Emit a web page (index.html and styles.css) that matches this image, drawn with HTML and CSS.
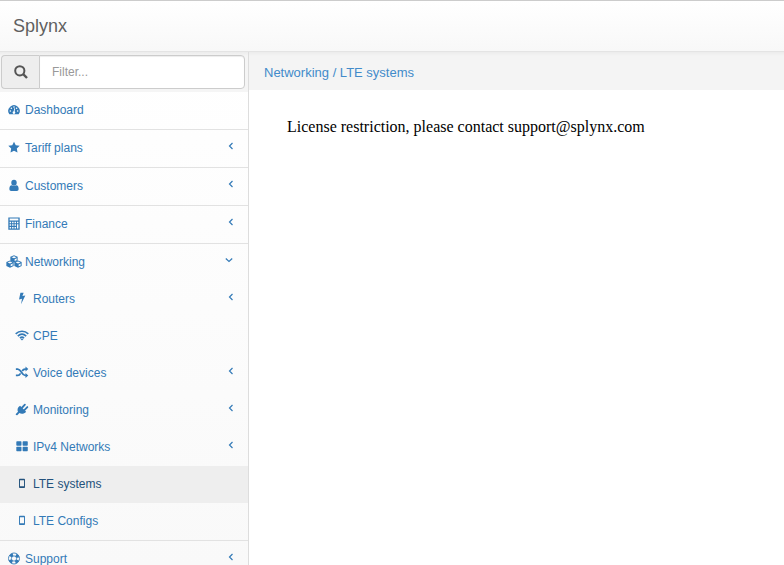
FILE: index.html
```html
<!DOCTYPE html>
<html lang="en">
<head>
<meta charset="utf-8">
<title>Splynx</title>
<link rel="stylesheet" href="styles.css">
</head>
<body>
<header class="navbar"><a class="brand">Splynx</a></header>
<div class="layout">
<aside class="sidebar">
  <div class="search">
    <span class="addon"><svg width="14" height="14" viewBox="0 0 14 14" fill="none" stroke="#555" stroke-width="2"><circle cx="5.800" cy="5.800" r="4.600"/><path d="M9.200 9.200 13 13" stroke-width="2.400"/></svg></span>
    <input class="filter" type="text" placeholder="Filter...">
  </div>
  <nav class="menu">
    <a class="item"><svg class="icon" viewBox="0 0 16 14"><path d="M2.700 12.500A6.500 6.500 0 1 1 13.300 12.500Z"/><g fill="#fff"><circle cx="3.800" cy="8.700" r=".9"/><circle cx="5" cy="5.500" r=".9"/><circle cx="8" cy="4.100" r=".9"/><circle cx="11" cy="5.500" r=".9"/><circle cx="12.200" cy="8.700" r=".9"/><path d="m8.400 5.500.9.200-.6 3.400a1.500 1.500 0 1 1-1.100-.2z"/></g></svg><span>Dashboard</span></a>
    <a class="item"><svg class="icon" viewBox="0 0 16 14"><path d="m8 .3 2 4.100 4.500.6-3.300 3.200.8 4.500L8 10.600l-4 2.100.8-4.500L1.500 5l4.500-.6z"/></svg><span>Tariff plans</span><svg class="chevron" viewBox="0 0 8 8"><path d="M5.500 1 2.500 4 5.500 7"/></svg></a>
    <a class="item"><svg class="icon" viewBox="0 0 16 14"><ellipse cx="8" cy="3.800" rx="3.100" ry="3.500"/><path d="M5.400 6.800c-1.800.2-2.700 1.700-2.700 4.200 0 1.400.8 2.200 2 2.200h6.600c1.200 0 2-.8 2-2.200 0-2.500-.9-4-2.700-4.200-1.600 1.200-3.600 1.200-5.200 0z"/></svg><span>Customers</span><svg class="chevron" viewBox="0 0 8 8"><path d="M5.500 1 2.500 4 5.500 7"/></svg></a>
    <a class="item"><svg class="icon" viewBox="0 0 16 14"><path fill-rule="evenodd" d="M1.500 0h13v14h-13zM3 1.200v2.300h10V1.200zM3 5v1.800h1.700V5zm2.800 0v1.800h1.700V5zm2.800 0v1.800h1.700V5zm2.800 0v1.800H13V5zM3 7.900v1.800h1.700V7.900zm2.800 0v1.800h1.700V7.900zm2.800 0v1.800h1.700V7.900zM3 10.900v1.800h1.700v-1.800zm2.800 0v1.800h1.700v-1.800zm2.800 0v1.800h1.700v-1.800zm2.800-3v4.800H13V7.900z"/></svg><span>Finance</span><svg class="chevron" viewBox="0 0 8 8"><path d="M5.500 1 2.500 4 5.500 7"/></svg></a>
    <a class="item"><svg class="icon wide" viewBox="0 0 18 14"><g id="cube"><path d="M9 0 13.100 1.700v4.500L9 8 4.900 6.200V1.700z"/><path d="m6.300 2.200 2.700 1.100 2.700-1.100L9 1.100zM9.700 4.500v2l2.300-1V3.400z" fill="#fdfdfd"/></g><use href="#cube" x="-4.500" y="5.900"/><use href="#cube" x="4.500" y="5.900"/></svg><span>Networking</span><svg class="chevron open" viewBox="0 0 8 8"><path d="m.8 2.500 3.200 3 3.200-3"/></svg></a>
    <div class="submenu">
      <a class="item"><svg class="icon" viewBox="0 0 16 14"><path d="M6.200.3h3.700L8.500 4.200l3.300-.7-4.900 10.200 1.100-6.400-3.400.8z"/></svg><span>Routers</span><svg class="chevron" viewBox="0 0 8 8"><path d="M5.500 1 2.500 4 5.500 7"/></svg></a>
      <a class="item"><svg class="icon" viewBox="0 0 16 14"><g fill="none" stroke="currentColor" stroke-width="1.900"><path d="M.8 5.100c4.200-4 10.200-4 14.400 0M3.200 7.600c2.900-2.700 6.700-2.700 9.600 0M5.600 9.900c1.600-1.300 3.200-1.300 4.800 0"/></g><path d="m6.300 10.900 1.700 1.800 1.700-1.800q-1.700-1.200-3.400 0z"/></svg><span>CPE</span></a>
      <a class="item"><svg class="icon" viewBox="0 0 16 14"><path d="M1 3h2.200C7 3 7.800 10.400 11.500 10.400h1M1 10.400h2.200c1.600 0 2.500-1.200 3.200-2.400M8.200 5.300c.7-1.200 1.600-2.300 3.300-2.300h1" fill="none" stroke="currentColor" stroke-width="2"/><path d="m12 .1 3.200 2.900L12 5.900zM12 7.500l3.200 2.900-3.200 2.900z"/></svg><span>Voice devices</span><svg class="chevron" viewBox="0 0 8 8"><path d="M5.500 1 2.500 4 5.500 7"/></svg></a>
      <a class="item"><svg class="icon" viewBox="0 0 16 14"><path d="m5.800 2.600 6.900 6.900c-2 2.500-5.300 3.100-7.700 1.600L2.600 13.500 1 13.300.9 12 3.400 9.500C2.200 7.200 3 4.200 5.800 2.600z"/><path d="m8 5 3.300-3.500M10.700 7.600l3.400-3.400" stroke="currentColor" stroke-width="2.100" stroke-linecap="round"/></svg><span>Monitoring</span><svg class="chevron" viewBox="0 0 8 8"><path d="M5.500 1 2.500 4 5.500 7"/></svg></a>
      <a class="item"><svg class="icon" viewBox="0 0 16 14"><rect x="1.500" y="1" width="5.900" height="5" rx=".8"/><rect x="8.700" y="1" width="5.900" height="5" rx=".8"/><rect x="1.500" y="7.400" width="5.900" height="5" rx=".8"/><rect x="8.700" y="7.400" width="5.900" height="5" rx=".8"/></svg><span>IPv4 Networks</span><svg class="chevron" viewBox="0 0 8 8"><path d="M5.500 1 2.500 4 5.500 7"/></svg></a>
      <a class="item active"><svg class="icon" viewBox="0 0 16 14"><path fill-rule="evenodd" d="M5.500 1.500h5q.9 0 .9.900v8.800q0 .9-.9.900h-5q-.9 0-.9-.9V2.400q0-.9.900-.9zm.2 1.700v7h4.600v-7z"/></svg><span>LTE systems</span></a>
      <a class="item"><svg class="icon" viewBox="0 0 16 14"><path fill-rule="evenodd" d="M5.500 1.500h5q.9 0 .9.900v8.800q0 .9-.9.900h-5q-.9 0-.9-.9V2.400q0-.9.900-.9zm.2 1.700v7h4.600v-7z"/></svg><span>LTE Configs</span></a>
    </div>
    <a class="item"><svg class="icon" viewBox="0 0 16 14"><g fill="none" stroke="currentColor"><circle cx="8" cy="7" r="6.300"/><circle cx="8" cy="7" r="3"/><circle cx="8" cy="7" r="4.600" stroke-width="3.200" stroke-dasharray="3.613 3.613" stroke-dashoffset="-1.806"/></g></svg><span>Support</span><svg class="chevron" viewBox="0 0 8 8"><path d="M5.500 1 2.500 4 5.500 7"/></svg></a>
  </nav>
</aside>
<main class="content">
  <div class="breadcrumb">Networking / LTE systems</div>
  <p class="message">License restriction, please contact support@splynx.com</p>
</main>
</div>
</body>
</html>
```
FILE: styles.css
```css
* { box-sizing: border-box; }
body {
  margin: 0;
  height: 565px;
  overflow: hidden;
  background: #fff;
  font: 12px/20px "Liberation Sans", Arial, sans-serif;
}
.navbar {
  height: 52px;
  padding: 15px 13px 0;
  border-top: 1px solid #ccc;
  border-bottom: 1px solid #e4e4e4;
  background: linear-gradient(#fff, #f8f8f8);
}
.brand { font-size: 18px; color: #606060; }
.layout { display: flex; height: 513px; }
.sidebar {
  flex: 0 0 249px;
  border-right: 1px solid #ddd;
  background: linear-gradient(#fff, #f9f9f9);
  overflow: hidden;
}
.search {
  display: flex;
  height: 40px;
  padding: 3px 3px 3px 1px;
  background: linear-gradient(#ececec, #f5f5f5 4px);
}
.addon {
  display: flex;
  align-items: center;
  justify-content: center;
  width: 38px;
  border: 1px solid #ccc;
  border-right: 0;
  border-radius: 4px 0 0 4px;
  background: #eee;
}
.filter {
  flex: 1;
  min-width: 0;
  padding: 0 12px;
  border: 1px solid #ccc;
  border-radius: 0 4px 4px 0;
  background: #fff;
  box-shadow: inset 0 1px 1px rgba(0, 0, 0, .075);
  font: inherit;
}
.filter::placeholder { color: #999; }
.item {
  display: flex;
  align-items: center;
  height: 38px;
  padding: 0 13px 1px 7px;
  border-bottom: 1px solid #e2e2e2;
  color: #337ab7;
}
.icon {
  flex: none;
  width: 14px;
  height: 13px;
  margin: 0 4px 1px 0;
  fill: currentColor;
}
.icon.wide { width: 16px; margin: 0 3px 1px -1px; }
.chevron {
  width: 8px;
  height: 8px;
  margin: 0 0 4px auto;
  fill: none;
  stroke: currentColor;
  stroke-width: 1.2;
}
.chevron.open { margin-right: 2px; }
.item:has(.open) { height: 37px; border: 0; }
.submenu { border-bottom: 1px solid #e2e2e2; }
.submenu .item { height: 37px; padding-left: 15px; border: 0; }
.submenu .active { background: #eee; color: #23527c; }
.content { flex: 1; }
.breadcrumb {
  height: 38px;
  padding: 11px 15px 0;
  background: linear-gradient(#ececec, #f4f4f4 4px);
  color: #428bca;
  font-size: 13px;
}
.message {
  margin: 27px 38px;
  color: #000;
  font: 16px/20px "Liberation Serif", "Times New Roman", serif;
}
```
